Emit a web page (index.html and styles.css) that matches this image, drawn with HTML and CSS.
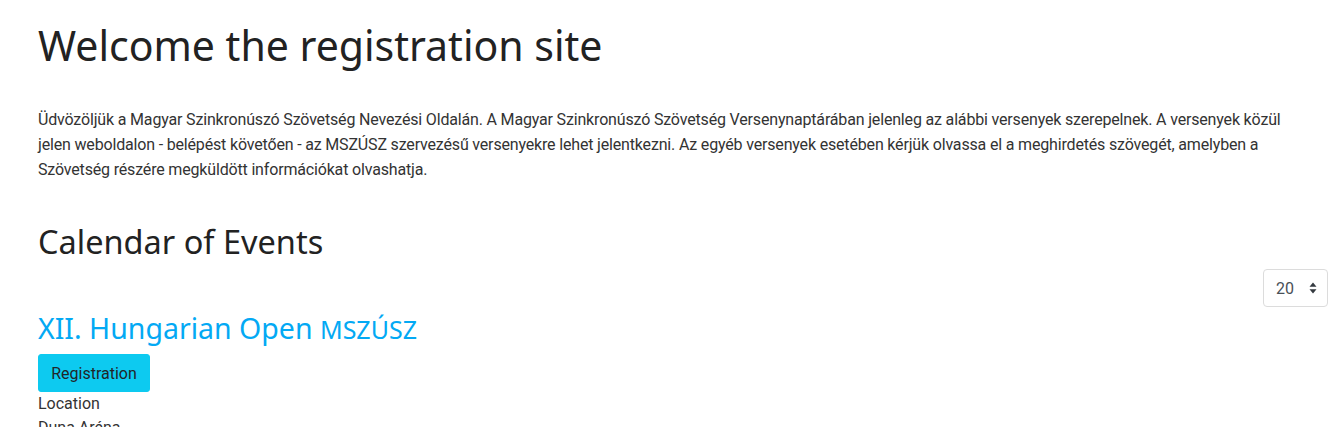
FILE: index.html
```html
<!DOCTYPE html>
<html lang="hu">
<head>
<meta charset="utf-8">
<title>Welcome the registration site</title>
<link rel="stylesheet" href="styles.css">
</head>
<body>
<main class="page">
  <h1 class="title">Welcome the registration site</h1>
  <p class="intro">Üdvözöljük a Magyar Szinkronúszó Szövetség Nevezési Oldalán. A Magyar Szinkronúszó Szövetség Versenynaptárában jelenleg az alábbi versenyek szerepelnek. A versenyek közül jelen weboldalon - belépést követően - az MSZÚSZ szervezésű versenyekre lehet jelentkezni. Az egyéb versenyek esetében kérjük olvassa el a meghirdetés szövegét, amelyben a Szövetség részére megküldött információkat olvashatja.</p>
  <h2 class="section-title">Calendar of Events</h2>
  <div class="toolbar">
    <div class="select">
      <span class="select-value">20</span>
      <svg class="select-caret" width="8" height="12" viewBox="0 0 8 12"><path d="M4 0.5 L7.5 4.8 H0.5 Z M4 11.5 L7.5 7.2 H0.5 Z" fill="#343a40"/></svg>
    </div>
  </div>
  <section class="event">
    <h3 class="event-title">XII. Hungarian Open <small class="event-org">MSZÚSZ</small></h3>
    <button class="btn-register" type="button">Registration</button>
    <div class="event-label">Location</div>
    <div class="event-value">Duna Aréna</div>
  </section>
</main>
</body>
</html>
```

FILE: styles.css
```css
html, body {
  margin: 0;
  padding: 0;
  background: #ffffff;
}
body {
  font-family: Roboto, "Noto Sans", sans-serif;
  font-size: 16px;
  color: #212529;
}
.page {
  padding: 0 15px 0 38px;
}
.title {
  font-family: "Noto Sans", "Open Sans", sans-serif;
  font-weight: 400;
  font-size: 41px;
  line-height: 48px;
  margin: 21px 0 0;
  color: #222;
}
.intro {
  margin: 38px 0 0;
  max-width: 1276px;
  line-height: 25px;
  font-size: 16px;
  letter-spacing: -0.17px;
  color: #333;
}
.section-title {
  font-family: "Noto Sans", "Open Sans", sans-serif;
  font-weight: 400;
  font-size: 32.5px;
  line-height: 40px;
  margin: 40px 0 0;
  color: #222;
}
.toolbar {
  display: flex;
  justify-content: flex-end;
  margin-top: 7px;
}
.select {
  width: 65px;
  height: 38px;
  box-sizing: border-box;
  border: 1px solid #dcdcdc;
  border-radius: 4px;
  display: flex;
  align-items: center;
  justify-content: space-between;
  padding: 0 10px 0 12px;
  color: #495057;
  font-size: 16px;
}
.event-title {
  font-family: "Noto Sans", "Open Sans", sans-serif;
  font-weight: 400;
  font-size: 28.5px;
  line-height: 36px;
  margin: 3px 0 7px;
  color: #03a9f4;
}
.event-org {
  font-size: 25px;
}
.btn-register {
  font-family: Roboto, sans-serif;
  font-size: 16px;
  color: #212529;
  background: #0dcaf0;
  border: 1px solid #0dcaf0;
  border-radius: 3px;
  height: 38px;
  width: 112px;
  padding: 0;
  display: block;
}
.event-label, .event-value {
  line-height: 24px;
  font-size: 16px;
  color: #333;
}
```
